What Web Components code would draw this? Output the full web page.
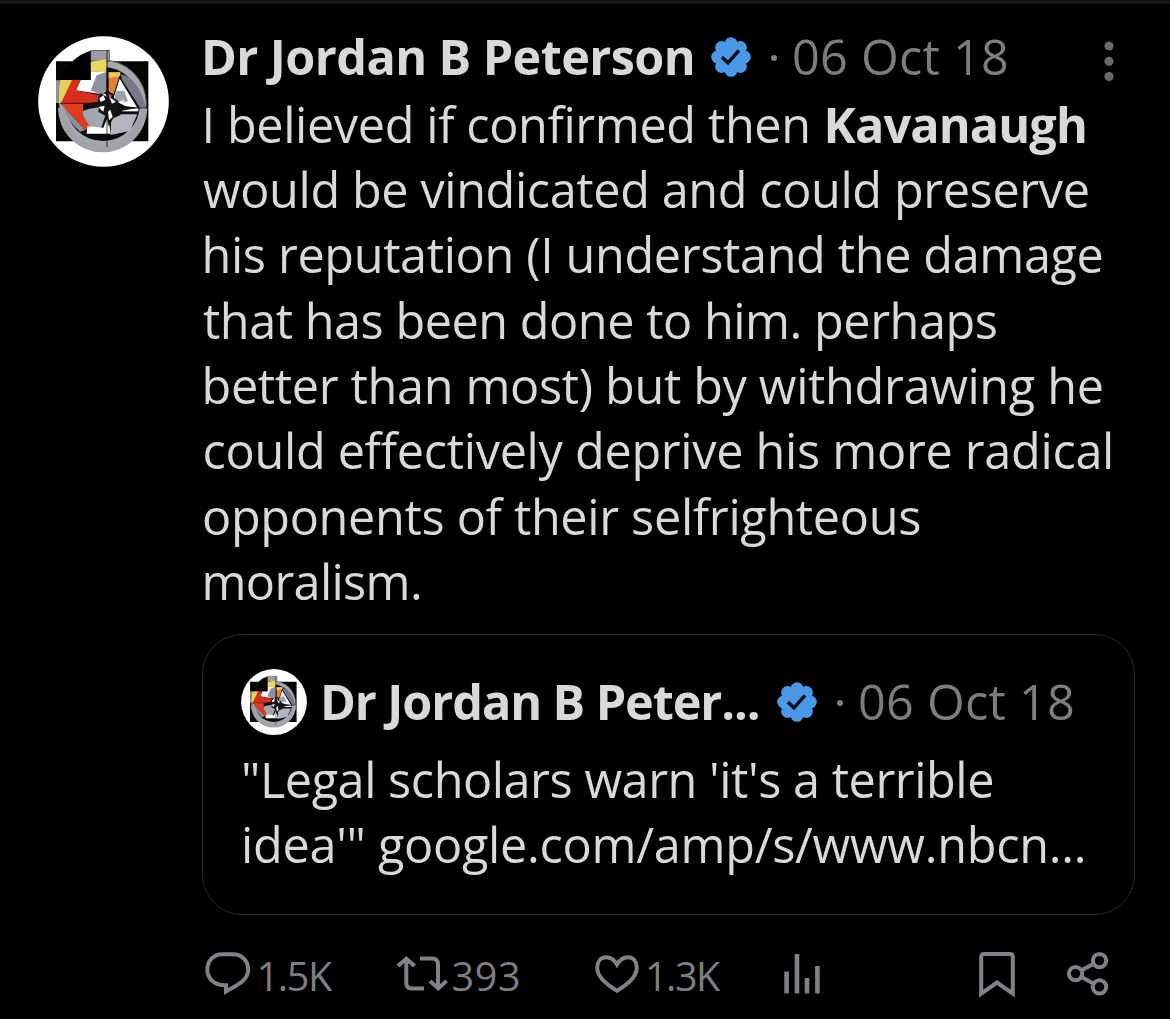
<!DOCTYPE html>
<html lang="en">
<head>
<meta charset="utf-8">
<title>Post</title>
<style>
html,body{margin:0;background:#000}
body{width:1170px;height:1019px;overflow:hidden;font-family:"Open Sans",sans-serif;color:#d9d9d9}
</style>
</head>
<body>
<post-card></post-card>
<script>
// Single-line text whose box is exactly its ink width; tracking is spread to fill it.
class TextRun extends HTMLElement{
  connectedCallback(){
    const r=this.attachShadow({mode:'open'});
    r.innerHTML='<style>:host{display:block;flex:none;white-space:pre;font-kerning:normal}span{display:inline-block;white-space:pre}</style><span><slot></slot></span>';
    const w=+this.getAttribute('w'),t=this.textContent,cs=getComputedStyle(this);
    const c=TextRun.ctx||(TextRun.ctx=document.createElement('canvas').getContext('2d'));
    c.font=cs.fontWeight+' '+cs.fontSize+' '+cs.fontFamily;
    c.letterSpacing='0.01px';
    const m=c.measureText(t);
    const ls=(w-m.actualBoundingBoxLeft-m.actualBoundingBoxRight)/(t.length-1);
    this.style.width=w+'px';
    const s=r.querySelector('span');
    s.style.letterSpacing=ls.toFixed(3)+'px';
    s.style.marginLeft=m.actualBoundingBoxLeft+'px';
  }
}
class UserAvatar extends HTMLElement{
  connectedCallback(){
    this.attachShadow({mode:'open'}).innerHTML=`<style>:host{display:block;flex:none}svg{display:block;width:100%;height:100%}</style>
<svg viewBox="24 25 393 393">
<circle cx="220.500" cy="221.500" r="196" fill="#fff"/>
<path d="M78 101H355V341H78Z" fill="#050505"/>
<circle cx="218" cy="228" r="131" fill="#a4a8ae" stroke="#55595e" stroke-width="3"/>
<circle cx="219" cy="229" r="111" fill="#0a0a0a"/>
<path d="M84 240A134 134 0 0 0 352 240L332 241A112 112 0 0 1 106 241Z" fill="#a0a4aa"/>
<path d="M182 69L238 68V101L182 100Z" fill="#9a9da3" stroke="#222" stroke-width="2"/>
<path d="M182 102L229 95V134L182 131Z" fill="#ead75c"/>
<path d="M182 131L229 133V190L215 200L138 188L152 157H182Z" fill="#fff"/>
<path d="M90 157H128L95 226H86Q82 190 90 157Z" fill="#e3d15a"/>
<path d="M78 158H92Q83 190 86 226H78Z" fill="#8e9299"/>
<path d="M126 157H152L138 188L208 203L222 212L224 228H92Z" fill="#d92e1b"/>
<path d="M92 228H160L158 262L180 294L166 307Z" fill="#e23a1e"/>
<path d="M92 228L166 307L150 312Q112 280 100 240Z" fill="#8b8f96"/>
<path d="M182 188L200 143L228 133V190L212 202Z" fill="#8d929c"/>
<path d="M90 157Q122 86 182 69V157Z" fill="#000"/>
<path d="M236 134H271L262 165L250 202L236 190Z" fill="#e4823c"/>
<path d="M236 134H271V145L236 151Z" fill="#efc65c"/>
<path d="M273 140Q325 150 348 240H330L275 155Z" fill="#737987"/>
<path d="M269 153L322 240L285 235L250 214Z" fill="#fff"/>
<path d="M259 190L282 189L294 220L270 228L252 214Z" fill="#9ca1ab"/>
<path d="M158 250L178 243L211 238L228 258L214 300L184 304L158 262Z" fill="#a2a7af"/>
<path d="M172 296L220 300L234 266L242 318H170Z" fill="#fff"/>
<path d="M244 260H322L300 310L242 322Z" fill="#b2b5bf"/>
<path d="M276 241H325V251H276Z" fill="#fff"/>
<path d="M205 206L212 197L226 203L235 192L250 198L251 212L270 222L265 236L325 240L268 251L272 262L250 272L236 296L229 266L204 252L208 240L160 229L203 222Z" fill="#151515"/>
<path d="M208 212L220 203L226 216L212 223ZM238 208L258 222L246 228ZM205 238L224 234L220 252ZM234 252L241 246L248 268L237 278ZM262 222L284 218L276 230ZM216 198L226 198L230 208Z" fill="#fff"/>
<path d="M235 197L246 204L238 215Z" fill="#c45a38"/>
<path d="M90 227H232M240 241H352M231 68V358" stroke="#111" stroke-width="2.500"/>
</svg>`;
  }
}
const ICONS={
  badge:['0 0 40 40','<g fill="#4a99e9"><circle cx="20" cy="20" r="16.200"/>'+[0,1,2,3,4,5,6,7].map(i=>{const a=i*Math.PI/4;return `<circle cx="${(20+13.400*Math.sin(a)).toFixed(2)}" cy="${(20-13.400*Math.cos(a)).toFixed(2)}" r="6.400"/>`}).join('')+'</g><path d="M11 20.300L17 25.800L28 13.300" fill="none" stroke="#060a12" stroke-width="3.400"/>'],
  more:['0 0 10 41','<g fill="#68696b"><circle cx="5" cy="5" r="4.600"/><circle cx="5" cy="20.300" r="4.600"/><circle cx="5" cy="35.600" r="4.600"/></g>'],
  reply:['0 0 46 44','<path d="M17 2.200H28C37.500 2.200 43.200 9.500 43.200 17.500C43.200 29 31 33.500 21 39.500V33.300C9.500 33.800 2.300 26.500 2.300 17.800C2.300 9 8.500 2.200 17 2.200Z"/>'],
  repost:['0 0 52 36','<path d="M2 10L10.300 2.600L18.600 10M10.300 3V27Q10.300 32.600 16 32.600H28M24 2.600H36Q42 2.600 42 8.500V32M34 25L42.300 32.400L50.500 25"/>'],
  like:['0 0 44 39','<path d="M22 9.500C18.500 3.600 14 2.100 10.500 2.300C5.500 2.600 2.200 7 2.200 13C2.200 22 11.500 29.500 22 35.800C32.500 29.500 41.800 22 41.800 13C41.800 7 38.500 2.600 33.500 2.300C30 2.100 25.500 3.600 22 9.500Z"/>'],
  views:['0 0 36 40','<path d="M2.600 17.500V39.500M13 0V39.500M23 24V39.500M33.400 12V39.500" stroke-width="4.600"/>'],
  save:['0 0 36 46','<path d="M2.200 41.600V5Q2.200 2 5.200 2H30.800Q33.800 2 33.800 5V41.600L18 30.500Z"/>'],
  share:['0 0 42 44','<circle cx="8.600" cy="21.600" r="6.700"/><circle cx="32.500" cy="8.600" r="6.700"/><circle cx="32.500" cy="34.900" r="6.700"/><path d="M14.600 18.300L26.700 11.700M14.600 24.900L26.700 31.700"/>']
};
class UiIcon extends HTMLElement{
  connectedCallback(){
    const [vb,body]=ICONS[this.getAttribute('name')],[,,w,h]=vb.split(' ');
    this.attachShadow({mode:'open'}).innerHTML=`<style>:host{display:block;flex:none;width:${w}px;height:${h}px}svg{display:block;overflow:visible}</style><svg width="${w}" height="${h}" viewBox="${vb}" fill="none" stroke="#808287" stroke-width="4">${body.replace(/<g fill/g,'<g stroke="none" fill')}</svg>`;
  }
}
class PostHeader extends HTMLElement{
  connectedCallback(){
    this.attachShadow({mode:'open'}).innerHTML=`<style>
:host{display:flex;align-items:center;height:66px;line-height:66px;font-size:48.600px}
.name{font-weight:700}
ui-icon{margin:2px 20px 0 18px}
i{width:6px;height:6px;border-radius:50%;background:#808184;margin:4px 17px 0 0}
.date{color:#7c7d80;font-weight:400}
</style><text-run class="name" w="${this.getAttribute('name-w')}">${this.getAttribute('name')}</text-run><ui-icon name="badge"></ui-icon><i></i><text-run class="date" w="213">06 Oct 18</text-run><slot></slot>`;
  }
}
class PostStat extends HTMLElement{
  connectedCallback(){
    this.attachShadow({mode:'open'}).innerHTML=`<style>:host{display:flex;align-items:flex-start;color:#7c7e83;font-size:39.500px;line-height:54px;font-weight:400}</style><slot name="icon"></slot><slot></slot>`;
  }
}
class QuotedPost extends HTMLElement{
  connectedCallback(){
    this.attachShadow({mode:'open'}).innerHTML=`<style>
:host{display:block;box-sizing:border-box;width:933px;height:281px;border:1.500px solid #292a2b;border-radius:40px;padding:33.500px 0 0 38px}
.top{display:flex;align-items:center;height:67px}
user-avatar{width:66px;height:66px;margin-right:17px}
post-header{margin-top:-1px}
.text{margin-top:11.500px;font-size:48.600px;line-height:65.300px}
</style><div class="top"><user-avatar></user-avatar><post-header name="Dr Jordan B Peter..." name-w="435"></post-header></div>
<div class="text"><text-run w="748.500" style="margin-left:3px">"Legal scholars warn 'it's a terrible</text-run><text-run w="840" style="margin-left:3px">idea'" google.com/amp/s/www.nbcn...</text-run></div>`;
  }
}
class PostCard extends HTMLElement{
  connectedCallback(){
    this.attachShadow({mode:'open'}).innerHTML=`<style>
:host{display:flex;box-sizing:border-box;width:1170px;height:1019px;padding-top:1px;background:linear-gradient(#0c0c0d,#242528 3px,#000 4px)}
.side{flex:none;width:202px;box-sizing:border-box;padding:35.300px 0 0 38px}
.side user-avatar{width:131px;height:131px}
.main{flex:1;display:flex;flex-direction:column;padding-top:21.700px}
.main>post-header{margin-left:3px}
.more{margin-left:97px;margin-top:12px}
.body{font-size:48.600px;line-height:65.330px;margin:3px 0 19.700px;height:522.600px}
.row{display:flex;gap:20px}
.actions{display:flex;margin-top:34px;align-items:flex-start}
b{font-weight:700}
</style>
<div class="side"><user-avatar></user-avatar></div>
<div class="main">
<post-header name="Dr Jordan B Peterson" name-w="488"><ui-icon class="more" name="more"></ui-icon></post-header>
<div class="body">
<div class="row" style="margin-left:3.500px"><text-run w="602">I believed if confirmed then</text-run><text-run w="257.500" style="font-weight:700">Kavanaugh</text-run></div>
<text-run w="885" style="margin-left:1px">would be vindicated and could preserve</text-run>
<text-run w="896.500" style="margin-left:3.500px">his reputation (I understand the damage</text-run>
<text-run w="793" style="margin-left:1px">that has been done to him. perhaps</text-run>
<text-run w="896.500" style="margin-left:3.500px">better than most) but by withdrawing he</text-run>
<text-run w="907" style="margin-left:2.500px">could effectively deprive his more radical</text-run>
<text-run w="715.500" style="margin-left:2px">opponents of their selfrighteous</text-run>
<text-run w="214.500" style="margin-left:3.500px">moralism.</text-run>
</div>
<quoted-post></quoted-post>
<div class="actions">
<post-stat style="margin-left:2.500px"><ui-icon slot="icon" name="reply" style="margin-top:3px"></ui-icon><text-run w="73.500" style="margin-left:9px">1.5K</text-run></post-stat>
<post-stat style="margin-left:63px"><ui-icon slot="icon" name="repost" style="margin-top:7px"></ui-icon><text-run w="66.500" style="margin-left:4.500px">393</text-run></post-stat>
<post-stat style="margin-left:76px"><ui-icon slot="icon" name="like" style="margin-top:6px"></ui-icon><text-run w="73" style="margin-left:9px">1.3K</text-run></post-stat>
<ui-icon name="views" style="margin:5px 0 0 63px"></ui-icon>
<ui-icon name="save" style="margin:3px 0 0 159px"></ui-icon>
<ui-icon name="share" style="margin:3px 0 0 52px"></ui-icon>
</div>
</div>`;
  }
}
customElements.define('text-run',TextRun);
customElements.define('user-avatar',UserAvatar);
customElements.define('ui-icon',UiIcon);
customElements.define('post-header',PostHeader);
customElements.define('post-stat',PostStat);
customElements.define('quoted-post',QuotedPost);
customElements.define('post-card',PostCard);
</script>
</body>
</html>
